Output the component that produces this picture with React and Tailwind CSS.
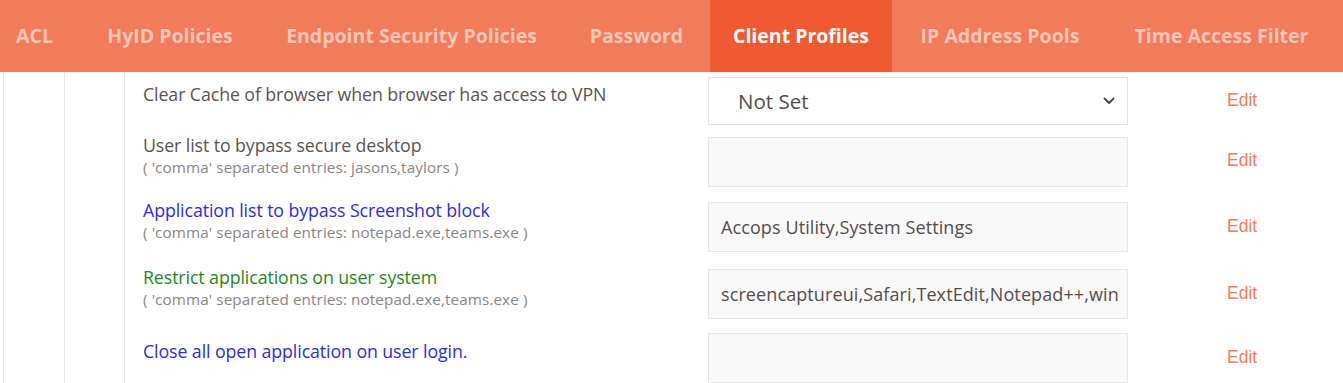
import React from "react";

const tabs = [
  { label: "ACL", w: "w-[80px] pr-[11px]" },
  { label: "HyID Policies", w: "w-[180px]" },
  { label: "Endpoint Security Policies", w: "w-[303px]" },
  { label: "Password", w: "w-[147px]" },
  { label: "Client Profiles", w: "w-[182px]", active: true },
  { label: "IP Address Pools", w: "w-[216px]" },
  { label: "Time Access Filter", w: "w-[227px]" },
];

function Chevron() {
  return (
    <svg width="12" height="8" viewBox="0 0 12 8" className="shrink-0">
      <path d="M1.5 1.5 L6 6 L10.5 1.5" fill="none" stroke="#4a4444" strokeWidth="1.8" strokeLinecap="round" strokeLinejoin="round" />
    </svg>
  );
}

const rows = [
  {
    label: "Clear Cache of browser when browser has access to VPN",
    color: "text-[#5c5454]",
    row: "h-[58px]",
    type: "select",
    value: "Not Set",
  },
  {
    label: "User list to bypass secure desktop",
    sub: "( 'comma' separated entries: jasons,taylors )",
    color: "text-[#5c5454]",
    row: "h-[63px]",
    value: "",
  },
  {
    label: "Application list to bypass Screenshot block",
    sub: "( 'comma' separated entries: notepad.exe,teams.exe )",
    color: "text-[#2b2bf0]",
    row: "h-[68px]",
    value: "Accops Utility,System Settings",
  },
  {
    label: "Restrict applications on user system",
    sub: "( 'comma' separated entries: notepad.exe,teams.exe )",
    color: "text-[#1c8a1c]",
    row: "h-[66px]",
    value: "screencaptureui,Safari,TextEdit,Notepad++,win",
  },
  {
    label: "Close all open application on user login.",
    color: "text-[#2b2bf0]",
    row: "h-[62px]",
    value: "",
  },
];

export default function App() {
  return (
    <div className="w-[1343px] h-[383px] overflow-hidden bg-white" style={{ fontFamily: '"Open Sans", "Noto Sans", sans-serif' }}>
      <div className="flex h-[72px] bg-[#f27b5b]">
        {tabs.map((t) => (
          <div
            key={t.label}
            className={`${t.w} shrink-0 flex items-center justify-center whitespace-nowrap text-[19.5px] font-bold ${
              t.active ? "bg-[#f05a30] text-white" : "text-[#fdc6b6]"
            }`}
          >
            {t.label}
          </div>
        ))}
      </div>
      <div className="flex h-[311px] pl-[3px]">
        <div className="w-[61px] border-l border-[#e6e6e6]" />
        <div className="w-[60px] border-l border-[#e6e6e6]" />
        <div className="flex-1 border-l border-[#e6e6e6] pl-[18px] flex flex-col">
          {rows.map((r, i) => (
            <div key={i} className={`flex items-center shrink-0 ${r.row}`}>
              <div className="flex-1 pb-[14px] flex flex-col whitespace-nowrap">
                <div className={`${r.color} text-[17.8px] leading-[24px] tracking-[-0.1px]`}>{r.label}</div>
                {r.sub && (
                  <div className="text-[#8a8585] text-[15.25px] leading-[20px] tracking-[0.1px]">{r.sub}</div>
                )}
              </div>
              {r.type === "select" ? (
                <div className="w-[420px] h-[48px] border border-[#e3e3e3] bg-white flex items-center pl-[29px] pr-[12px]">
                  <span className="flex-1 text-[#554d4d] text-[20.5px]">{r.value}</span>
                  <Chevron />
                </div>
              ) : (
                <div className="w-[420px] h-[50px] border border-[#e6e6e6] bg-[#f9f9f9] flex items-center pl-[12px] overflow-hidden whitespace-nowrap">
                  <span className="text-[#554d4d] text-[18px] tracking-[0.1px]">{r.value}</span>
                </div>
              )}
              <div className="w-[215px] pl-[99px] pb-[2px] text-[#f27b5b] text-[17.5px]" style={{ fontFamily: '"Liberation Sans", Arial, sans-serif' }}>
                Edit
              </div>
            </div>
          ))}
        </div>
      </div>
    </div>
  );
}
